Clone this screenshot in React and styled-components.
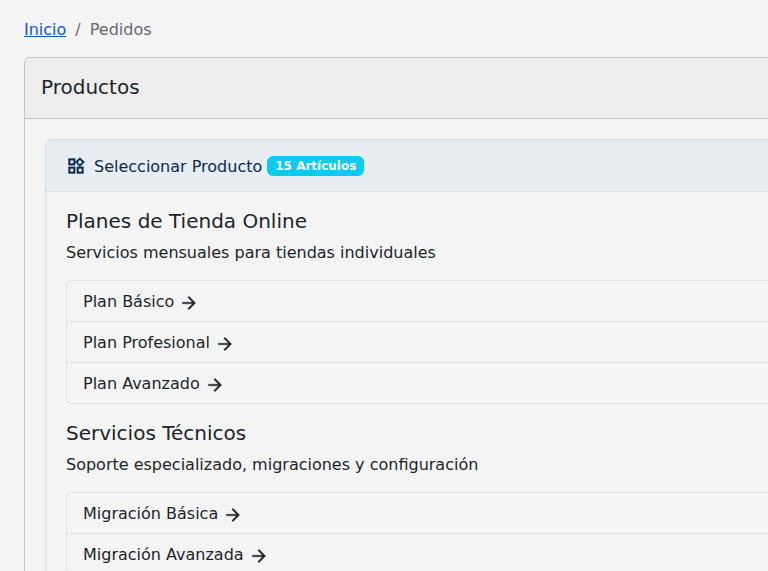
import React from 'react';
import styled, { createGlobalStyle } from 'styled-components';
import { MdArrowForward, MdOutlineWidgets } from 'react-icons/md';

const GlobalStyle = createGlobalStyle`
  *,
  *::before,
  *::after {
    box-sizing: border-box;
  }

  body {
    margin: 0;
    background-color: #f4f4f4;
    color: #212529;
    font-family: Verdana, 'DejaVu Sans', sans-serif;
    font-size: 16px;
    line-height: 24px;
    overflow: hidden;
  }

  svg path:not([fill='none']) {
    stroke-width: 0.4;
  }
`;

const Page = styled.main`
  height: 100vh;
  overflow: hidden;
  padding: 18px 0 0 24px;
`;

const Breadcrumb = styled.ol`
  display: flex;
  gap: 9px;
  margin: 0 0 15px;
  padding: 0;
  list-style: none;
`;

const BreadcrumbItem = styled.li`
  display: flex;
  gap: 9px;
  color: #65696d;

  & + &::before {
    content: '/';
  }
`;

const BreadcrumbLink = styled.a`
  color: #0a58ca;
  text-decoration: underline;
`;

const Card = styled.section`
  border: 1px solid #c4c4c4;
  border-right: 0;
  border-radius: 6px 0 0 0;
  overflow: hidden;
`;

const CardHeader = styled.header`
  padding: 17px 16px 19px;
  background-color: #ededed;
  border-bottom: 1px solid #c4c4c4;
`;

const CardTitle = styled.h1`
  margin: 0;
  font-size: 20px;
  font-weight: 400;
  line-height: 24px;
`;

const CardBody = styled.div`
  padding: 20px 0 20px 20px;
`;

const Picker = styled.section`
  border: 1px solid #dadee2;
  border-right: 0;
  border-radius: 6px 0 0 6px;
  overflow: hidden;
`;

const PickerHeader = styled.header`
  display: flex;
  align-items: center;
  padding: 13px 20px 12px;
  background-color: #e8edf1;
  border-bottom: 1px solid #d8dee3;
  color: #0b2a4f;
`;

const PickerTitle = styled.h2`
  margin: 0 5px 0 8px;
  padding-top: 2px;
  font-size: 16px;
  font-weight: 400;
  line-height: 24px;
`;

const Badge = styled.span`
  padding: 4px 8px;
  border-radius: 6px;
  background-color: #0dcaf0;
  color: #fff;
  font-size: 12px;
  font-weight: 700;
  line-height: 12px;
`;

const PickerBody = styled.div`
  padding: 17px 0 16px 20px;
`;

const Group = styled.section`
  margin-bottom: 17px;
`;

const GroupTitle = styled.h3`
  margin: 0 0 8px;
  font-size: 20px;
  font-weight: 400;
  line-height: 24px;
`;

const GroupText = styled.p`
  margin: 0 0 15px;
`;

const ProductList = styled.ul`
  margin: 0;
  padding: 0;
  border: 1px solid #dee0e2;
  border-right: 0;
  border-radius: 6px 0 0 6px;
  list-style: none;
`;

const ProductItem = styled.li`
  & + & {
    border-top: 1px solid #dee0e2;
  }
`;

const ProductLink = styled.a`
  display: flex;
  align-items: flex-end;
  gap: 5px;
  padding: 9px 16px 7px;
  color: inherit;
  text-decoration: none;

  svg {
    margin-bottom: 1px;
  }
`;

const groups = [
  {
    title: 'Planes de Tienda Online',
    text: 'Servicios mensuales para tiendas individuales',
    products: ['Plan Básico', 'Plan Profesional', 'Plan Avanzado'],
  },
  {
    title: 'Servicios Técnicos',
    text: 'Soporte especializado, migraciones y configuración',
    products: ['Migración Básica', 'Migración Avanzada'],
  },
];

const App = () => (
  <>
    <GlobalStyle />
    <Page>
      <nav aria-label="breadcrumb">
        <Breadcrumb>
          <BreadcrumbItem>
            <BreadcrumbLink href="#inicio">Inicio</BreadcrumbLink>
          </BreadcrumbItem>
          <BreadcrumbItem aria-current="page">Pedidos</BreadcrumbItem>
        </Breadcrumb>
      </nav>

      <Card>
        <CardHeader>
          <CardTitle>Productos</CardTitle>
        </CardHeader>
        <CardBody>
          <Picker>
            <PickerHeader>
              <MdOutlineWidgets size={20} />
              <PickerTitle>Seleccionar Producto</PickerTitle>
              <Badge>15 Artículos</Badge>
            </PickerHeader>
            <PickerBody>
              {groups.map((group) => (
                <Group key={group.title}>
                  <GroupTitle>{group.title}</GroupTitle>
                  <GroupText>{group.text}</GroupText>
                  <ProductList>
                    {group.products.map((product) => (
                      <ProductItem key={product}>
                        <ProductLink href="#producto">
                          {product}
                          <MdArrowForward size={20} />
                        </ProductLink>
                      </ProductItem>
                    ))}
                  </ProductList>
                </Group>
              ))}
            </PickerBody>
          </Picker>
        </CardBody>
      </Card>
    </Page>
  </>
);

export default App;
